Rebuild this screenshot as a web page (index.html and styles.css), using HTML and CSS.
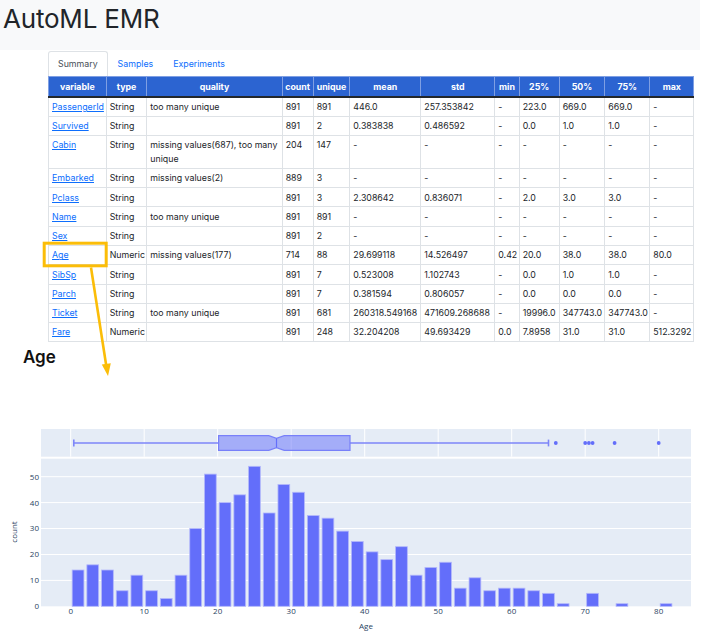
FILE: index.html
```html
<!DOCTYPE html>
<html>
<head>
<meta charset="utf-8">
<link rel="stylesheet" href="styles.css">
</head>
<body>
<div class="page">
  <header class="topbar"><h1 class="brand">AutoML EMR</h1></header>

  <nav class="tabs">
    <span class="tab active">Summary</span>
    <a class="tab" href="#">Samples</a>
    <a class="tab" href="#">Experiments</a>
  </nav>

  <table class="summary">
    <colgroup>
      <col class="c-var"><col class="c-type"><col class="c-quality"><col class="c-count"><col class="c-unique">
      <col class="c-mean"><col class="c-std"><col class="c-min"><col class="c-q25"><col class="c-q50"><col class="c-q75"><col class="c-max">
    </colgroup>
    <thead>
      <tr><th>variable</th><th>type</th><th>quality</th><th>count</th><th>unique</th><th>mean</th><th>std</th><th>min</th><th>25%</th><th>50%</th><th>75%</th><th>max</th></tr>
    </thead>
    <tbody>
      <tr><td><a href="#">PassengerId</a></td><td>String</td><td>too many unique</td><td>891</td><td>891</td><td>446.0</td><td>257.353842</td><td>-</td><td>223.0</td><td>669.0</td><td>669.0</td><td>-</td></tr>
      <tr><td><a href="#">Survived</a></td><td>String</td><td></td><td>891</td><td>2</td><td>0.383838</td><td>0.486592</td><td>-</td><td>0.0</td><td>1.0</td><td>1.0</td><td>-</td></tr>
      <tr><td><a href="#">Cabin</a></td><td>String</td><td>missing values(687), too many unique</td><td>204</td><td>147</td><td>-</td><td>-</td><td>-</td><td>-</td><td>-</td><td>-</td><td>-</td></tr>
      <tr><td><a href="#">Embarked</a></td><td>String</td><td>missing values(2)</td><td>889</td><td>3</td><td>-</td><td>-</td><td>-</td><td>-</td><td>-</td><td>-</td><td>-</td></tr>
      <tr><td><a href="#">Pclass</a></td><td>String</td><td></td><td>891</td><td>3</td><td>2.308642</td><td>0.836071</td><td>-</td><td>2.0</td><td>3.0</td><td>3.0</td><td>-</td></tr>
      <tr><td><a href="#">Name</a></td><td>String</td><td>too many unique</td><td>891</td><td>891</td><td>-</td><td>-</td><td>-</td><td>-</td><td>-</td><td>-</td><td>-</td></tr>
      <tr><td><a href="#">Sex</a></td><td>String</td><td></td><td>891</td><td>2</td><td>-</td><td>-</td><td>-</td><td>-</td><td>-</td><td>-</td><td>-</td></tr>
      <tr><td><a href="#">Age</a></td><td>Numeric</td><td>missing values(177)</td><td>714</td><td>88</td><td>29.699118</td><td>14.526497</td><td>0.42</td><td>20.0</td><td>38.0</td><td>38.0</td><td>80.0</td></tr>
      <tr><td><a href="#">SibSp</a></td><td>String</td><td></td><td>891</td><td>7</td><td>0.523008</td><td>1.102743</td><td>-</td><td>0.0</td><td>1.0</td><td>1.0</td><td>-</td></tr>
      <tr><td><a href="#">Parch</a></td><td>String</td><td></td><td>891</td><td>7</td><td>0.381594</td><td>0.806057</td><td>-</td><td>0.0</td><td>0.0</td><td>0.0</td><td>-</td></tr>
      <tr><td><a href="#">Ticket</a></td><td>String</td><td>too many unique</td><td>891</td><td>681</td><td>260318.549168</td><td>471609.268688</td><td>-</td><td>19996.0</td><td>347743.0</td><td>347743.0</td><td>-</td></tr>
      <tr><td><a href="#">Fare</a></td><td>Numeric</td><td></td><td>891</td><td>248</td><td>32.204208</td><td>49.693429</td><td>0.0</td><td>7.8958</td><td>31.0</td><td>31.0</td><td>512.3292</td></tr>
    </tbody>
  </table>

  <h2 class="section-title">Age</h2>

  <svg class="chart" width="703" height="232" viewBox="0 400 703 232">
    <!-- box subplot -->
    <rect class="plotbg" x="41" y="428" width="650" height="27.7"/>
    <g class="grid">
      <line x1="70.7" y1="428" x2="70.7" y2="455.7"/>
      <line x1="144.2" y1="428" x2="144.2" y2="455.7"/>
      <line x1="217.7" y1="428" x2="217.7" y2="455.7"/>
      <line x1="291.2" y1="428" x2="291.2" y2="455.7"/>
      <line x1="364.7" y1="428" x2="364.7" y2="455.7"/>
      <line x1="438.2" y1="428" x2="438.2" y2="455.7"/>
      <line x1="511.7" y1="428" x2="511.7" y2="455.7"/>
      <line x1="585.2" y1="428" x2="585.2" y2="455.7"/>
      <line x1="658.7" y1="428" x2="658.7" y2="455.7"/>
    </g>
    <g class="whisker">
      <line x1="73.8" y1="442" x2="218.6" y2="442"/>
      <line x1="350" y1="442" x2="548.5" y2="442"/>
      <line x1="73.8" y1="438.6" x2="73.8" y2="445.4"/>
      <line x1="548.5" y1="438.6" x2="548.5" y2="445.4"/>
    </g>
    <path class="box" d="M218.6,434.7 H268.8 L276.5,437.4 L284.2,434.7 H350 V449.3 H284.2 L276.5,446.6 L268.8,449.3 H218.6 Z"/>
    <line class="median" x1="276.5" y1="437.4" x2="276.5" y2="446.6"/>
    <g class="outliers">
      <circle cx="555.8" cy="442" r="1.9"/>
      <circle cx="585.2" cy="442" r="1.9"/>
      <circle cx="588.9" cy="442" r="1.9"/>
      <circle cx="592.6" cy="442" r="1.9"/>
      <circle cx="614.6" cy="442" r="1.9"/>
      <circle cx="658.7" cy="442" r="1.9"/>
    </g>

    <!-- histogram subplot -->
    <rect class="plotbg" x="41" y="457.7" width="650" height="147.6"/>
    <g class="grid">
      <line x1="41" y1="579.4" x2="691" y2="579.4"/>
      <line x1="41" y1="553.5" x2="691" y2="553.5"/>
      <line x1="41" y1="527.5" x2="691" y2="527.5"/>
      <line x1="41" y1="501.6" x2="691" y2="501.6"/>
      <line x1="41" y1="475.7" x2="691" y2="475.7"/>
    </g>
    <g class="bars">
      <rect x="72.17" y="569.01" width="11.76" height="36.29"/>
      <rect x="86.87" y="563.83" width="11.76" height="41.47"/>
      <rect x="101.57" y="569.01" width="11.76" height="36.29"/>
      <rect x="116.27" y="589.75" width="11.76" height="15.55"/>
      <rect x="130.97" y="574.2" width="11.76" height="31.1"/>
      <rect x="145.67" y="589.75" width="11.76" height="15.55"/>
      <rect x="160.37" y="597.52" width="11.76" height="7.78"/>
      <rect x="175.07" y="574.2" width="11.76" height="31.1"/>
      <rect x="189.77" y="527.54" width="11.76" height="77.76"/>
      <rect x="204.47" y="473.11" width="11.76" height="132.19"/>
      <rect x="219.17" y="501.62" width="11.76" height="103.68"/>
      <rect x="233.87" y="493.84" width="11.76" height="111.46"/>
      <rect x="248.57" y="465.33" width="11.76" height="139.97"/>
      <rect x="263.27" y="511.99" width="11.76" height="93.31"/>
      <rect x="277.97" y="483.48" width="11.76" height="121.82"/>
      <rect x="292.67" y="491.25" width="11.76" height="114.05"/>
      <rect x="307.37" y="514.58" width="11.76" height="90.72"/>
      <rect x="322.07" y="517.17" width="11.76" height="88.13"/>
      <rect x="336.77" y="530.13" width="11.76" height="75.17"/>
      <rect x="351.47" y="540.5" width="11.76" height="64.8"/>
      <rect x="366.17" y="550.87" width="11.76" height="54.43"/>
      <rect x="380.87" y="558.64" width="11.76" height="46.66"/>
      <rect x="395.57" y="545.68" width="11.76" height="59.62"/>
      <rect x="410.27" y="574.2" width="11.76" height="31.1"/>
      <rect x="424.97" y="566.42" width="11.76" height="38.88"/>
      <rect x="439.67" y="561.24" width="11.76" height="44.06"/>
      <rect x="454.37" y="587.16" width="11.76" height="18.14"/>
      <rect x="469.07" y="576.79" width="11.76" height="28.51"/>
      <rect x="483.77" y="589.75" width="11.76" height="15.55"/>
      <rect x="498.47" y="587.16" width="11.76" height="18.14"/>
      <rect x="513.17" y="587.16" width="11.76" height="18.14"/>
      <rect x="527.87" y="589.75" width="11.76" height="15.55"/>
      <rect x="542.57" y="592.34" width="11.76" height="12.96"/>
      <rect x="557.27" y="602.71" width="11.76" height="2.59"/>
      <rect x="586.67" y="592.34" width="11.76" height="12.96"/>
      <rect x="616.07" y="602.71" width="11.76" height="2.59"/>
      <rect x="660.17" y="602.71" width="11.76" height="2.59"/>
    </g>
    <g class="ytick">
      <text x="39" y="608.2">0</text>
      <text x="39" y="582.3">10</text>
      <text x="39" y="556.4">20</text>
      <text x="39" y="530.4">30</text>
      <text x="39" y="504.5">40</text>
      <text x="39" y="478.6">50</text>
    </g>
    <g class="xtick">
      <text x="70.7" y="613.3">0</text>
      <text x="144.2" y="613.3">10</text>
      <text x="217.7" y="613.3">20</text>
      <text x="291.2" y="613.3">30</text>
      <text x="364.7" y="613.3">40</text>
      <text x="438.2" y="613.3">50</text>
      <text x="511.7" y="613.3">60</text>
      <text x="585.2" y="613.3">70</text>
      <text x="658.7" y="613.3">80</text>
    </g>
    <text class="axis-title" x="366" y="627.5">Age</text>
    <text class="axis-title" transform="translate(17 531) rotate(-90)">count</text>
  </svg>

  <svg class="annotation" width="703" height="632" viewBox="0 0 703 632">
    <rect class="hl-box" x="44.2" y="243.2" width="62" height="22.6"/>
    <line class="hl-line" x1="91" y1="267.5" x2="106.3" y2="366"/>
    <polygon class="hl-head" points="108,376 101.8,364.5 110.8,363.2"/>
  </svg>
</div>
</body>
</html>
```
FILE: styles.css
```css
* { box-sizing: border-box; }
html, body { margin: 0; padding: 0; background: #fff; }
body {
  font-family: Inter, "Noto Sans", "Liberation Sans", sans-serif;
  color: #212529;
}
.page {
  position: relative;
  width: 703px;
  height: 632px;
  overflow: hidden;
}
.topbar {
  width: 700px;
  height: 50px;
  background: #f8f9fa;
  padding: 4px 0 0 3px;
}
.brand {
  margin: 0;
  font-size: 26px;
  font-weight: 400;
  line-height: 30px;
  letter-spacing: -0.2px;
  color: #212529;
}
.tabs {
  display: flex;
  margin: 1px 0 0 48px;
  height: 25px;
}
.tab {
  display: block;
  padding: 0 9px;
  line-height: 24px;
  font-size: 8.8px;
  color: #0d6efd;
  text-decoration: none;
  border: 1px solid transparent;
  border-bottom: none;
}
.tab.active {
  color: #495057;
  background: #fff;
  border-color: #dee2e6;
  border-radius: 3px 3px 0 0;
}
.summary {
  margin-left: 48px;
  width: 646px;
  table-layout: fixed;
  border-collapse: collapse;
  font-size: 8.8px;
  line-height: 13.5px;
}
.c-var { width: 57.7px; }
.c-type { width: 40.6px; }
.c-quality { width: 135.4px; }
.c-count { width: 31px; }
.c-unique { width: 36.6px; }
.c-mean { width: 71px; }
.c-std { width: 74px; }
.c-min { width: 24.4px; }
.c-q25 { width: 40px; }
.c-q50 { width: 45.6px; }
.c-q75 { width: 45px; }
.c-max { width: 44px; }
.summary th {
  background: #2c64d1;
  color: #fff;
  font-weight: 700;
  text-align: center;
  padding: 2.5px 2px;
  border: 1px solid #7f9fe3;
  border-bottom: 2px solid #23272b;
  white-space: nowrap;
}
.summary td {
  padding: 2.4px 3px;
  border: 1px solid #dee2e6;
  vertical-align: top;
  white-space: normal;
  overflow: hidden;
}
.summary td a {
  color: #0d6efd;
  text-decoration: underline;
}
.section-title {
  margin: 4px 0 0 23px;
  font-size: 17px;
  font-weight: 600;
  line-height: 22px;
  color: #111;
}
.chart {
  display: block;
  margin-top: 33px;
}
.plotbg { fill: #e5ecf6; }
.grid line { stroke: #fff; stroke-width: 1; }
.whisker line { stroke: #7d86f9; stroke-width: 1.6; }
.box { fill: rgba(99, 110, 250, 0.5); stroke: #7880f9; stroke-width: 1.2; }
.median { stroke: #636efa; stroke-width: 1.2; }
.outliers circle { fill: #636efa; }
.bars rect { fill: #636efa; stroke: #b3b8fb; stroke-width: 0.8; }
.ytick text, .xtick text, .axis-title {
  font-family: "Open Sans", "Liberation Sans", sans-serif;
  font-size: 8px;
  fill: #2a3f5f;
}
.ytick text { text-anchor: end; }
.xtick text { text-anchor: middle; }
.axis-title { text-anchor: middle; }
.annotation {
  position: absolute;
  left: 0;
  top: 0;
  pointer-events: none;
}
.hl-box { fill: none; stroke: #fbbd08; stroke-width: 3; }
.hl-line { stroke: #fbbd08; stroke-width: 2.6; }
.hl-head { fill: #fbbd08; }
```
